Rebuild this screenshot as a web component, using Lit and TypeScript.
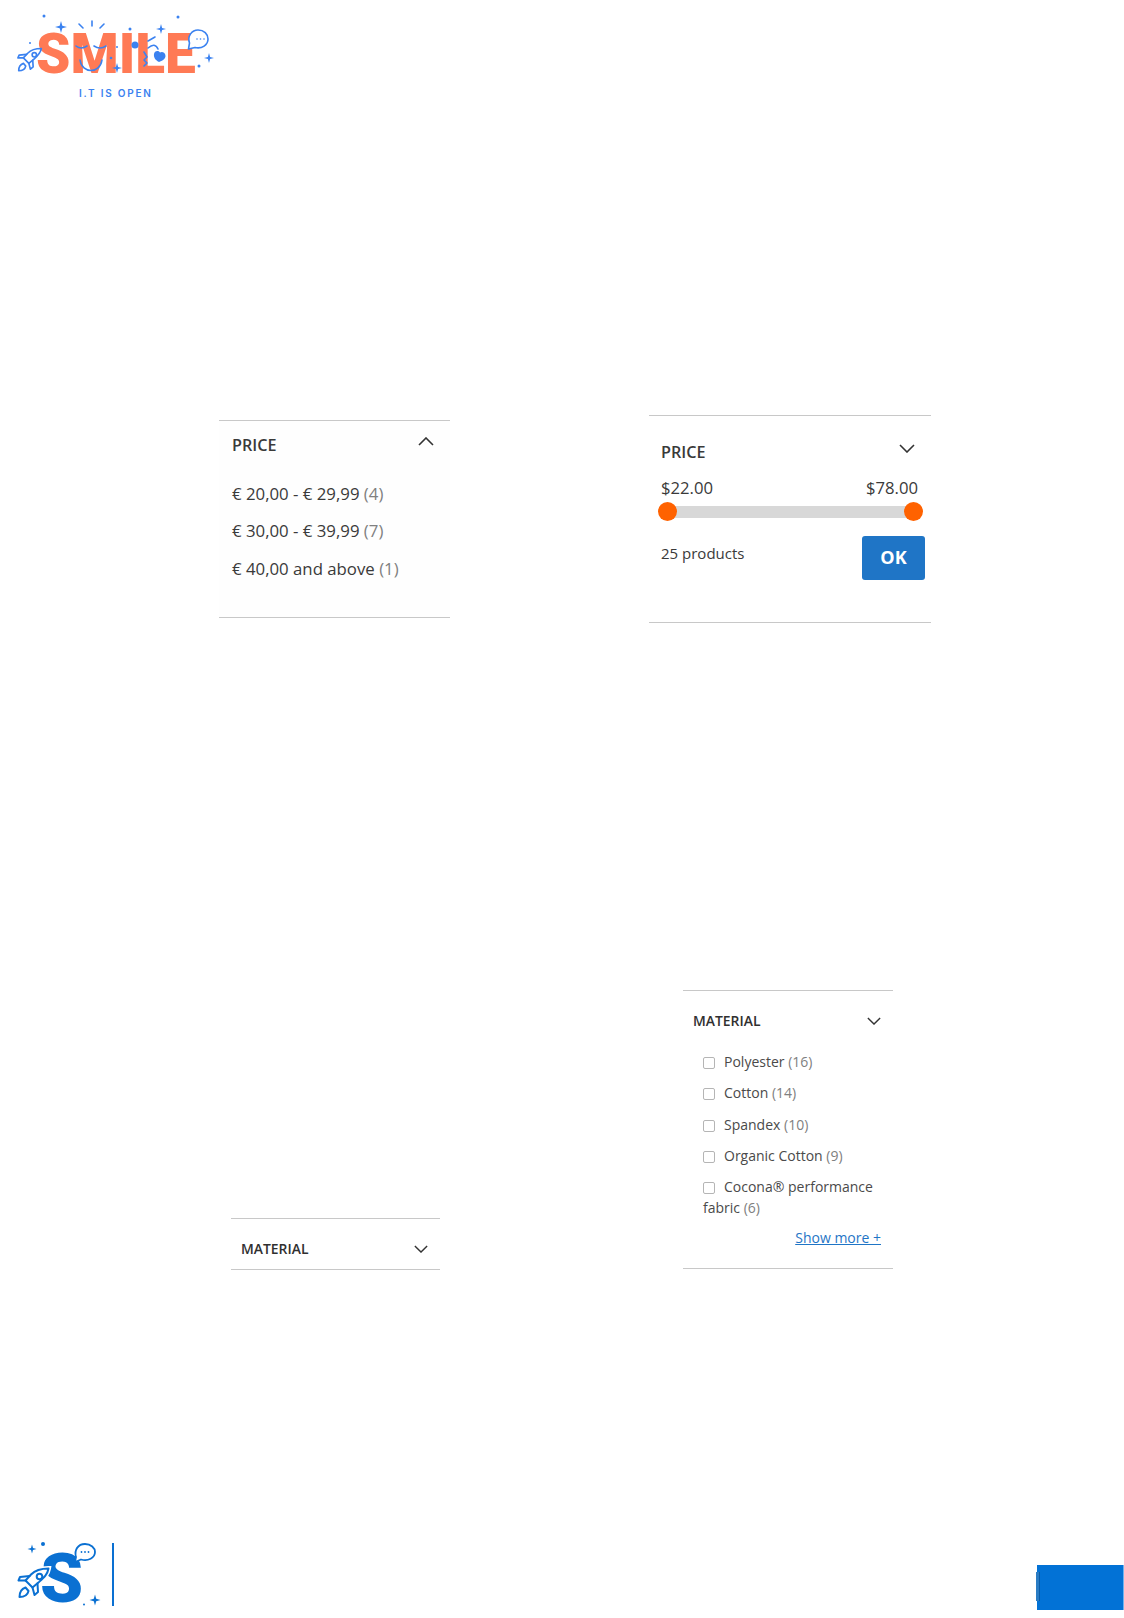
import { LitElement, html, css, svg } from "lit";
import { customElement } from "lit/decorators.js";

const chevron = (up = false) => html`<svg class="chev" viewBox="0 0 16 9" width="16" height="9" fill="none" stroke="#333" stroke-width="1.6"><path d=${up ? "M1 8L8 1L15 8" : "M1 1L8 8L15 1"}/></svg>`;

/* Rocket drawn in footer-logo space (nose near 48.5,38; tail near 19,68) */
const rocket = (c: string, w: number) => svg`<g fill="none" stroke=${c} stroke-width=${w} stroke-linejoin="round" stroke-linecap="round">
  <path d="M48.5 38.5C42 38.5 35 40.5 31 44.5L25.5 50.5L32.5 57.5L39 52C44 47.5 47.5 44.5 48.5 38.5Z"/>
  <circle cx="39.5" cy="46.5" r="2.8"/>
  <path d="M29.5 46L20 47L18.5 50.5L25.5 50.5"/>
  <path d="M37.5 53.5L38 62L34.5 65L32.5 57.5"/>
  <path d="M25.5 57.5C21 59 19.5 63 19.5 67C23.5 67 27.5 65.5 28.5 61Z"/>
</g>`;

const star = (x: number, y: number, r: number, c: string) => svg`<path fill=${c} d="M${x} ${y - r}L${x + r * 0.22} ${y - r * 0.22}L${x + r} ${y}L${x + r * 0.22} ${y + r * 0.22}L${x} ${y + r}L${x - r * 0.22} ${y + r * 0.22}L${x - r} ${y}L${x - r * 0.22} ${y - r * 0.22}Z"/>`;

const topLogoArt = (c: string) => svg`
  ${star(61, 27, 6, c)}${star(161, 29, 5, c)}${star(117, 68, 5, c)}${star(209, 58, 5, c)}
  <path fill="#fff" stroke=${c} stroke-width="1.6" stroke-linejoin="round" d="M188.500 49L189.500 43C187 36 192 30 198 30C204 30 208 34 208 39C208 45 202 49 195 47.500Z"/>
  <g fill=${c}>
    <circle cx="44" cy="16" r="1.5"/><circle cx="178" cy="17" r="1.5"/><circle cx="130" cy="29" r="1.5"/>
    <circle cx="30" cy="43" r="1"/><circle cx="117" cy="47" r="1"/><circle cx="111" cy="58" r="1.3"/>
    <circle cx="199" cy="66" r="1.5"/><circle cx="135" cy="45" r="3.5"/>
    <path d="M159 62C155 60 153.500 57 154 54C154.500 51 158 50 160 52.500C162 51 165.500 52.500 165.500 56C165.500 59 162 61 159 62Z"/>
    <circle cx="197" cy="39" r=".8"/><circle cx="200.500" cy="39" r=".8"/><circle cx="204" cy="39" r=".8"/>
  </g>
  <g stroke=${c} stroke-width="1.6" stroke-linecap="round" stroke-linejoin="round" fill="none">
    <path d="M79 24L83 28M92 21V26M104 24L100 28"/>
    <path d="M76 46Q81 50 87 46M94 46Q100 50 106 46M80 60C82 74 100 74 102 60"/>
    <path d="M148 41L155 37M148 48Q155 42 158 49M144 52L147 57L144 60L147 63L144 66"/>
  </g>
  <g transform="translate(3.500 18.500) scale(.78)">${rocket(c, 2.1)}</g>`;

const footLogoArt = (c: string) => svg`
  ${star(32, 19, 4.500, c)}${star(95, 70, 5.500, c)}
  <g fill=${c}><circle cx="43" cy="14" r="2"/><circle cx="84" cy="74.500" r="1"/></g>
  <path fill="#fff" stroke="#fff" stroke-width="5" d="M48.500 38.500C42 38.500 35 40.500 31 44.500L25.500 50.500L32.500 57.500L39 52C44 47.500 47.500 44.500 48.500 38.500Z"/>
  ${rocket(c, 2)}
  <path fill="#fff" stroke=${c} stroke-width="1.800" stroke-linejoin="round" d="M75 32L76 27C74 20 78 14 85 14C91 14 95 18 95 22C95 28 88 31.500 81 29.500Z"/>
  <g fill=${c}><circle cx="81.500" cy="22" r=".9"/><circle cx="85" cy="22" r=".9"/><circle cx="88.500" cy="22" r=".9"/></g>`;

@customElement("app-root")
export class AppRoot extends LitElement {
  static styles = css`
    :host { display: block; width: 1124px; height: 1618px; overflow: hidden; background: #fff; font-family: "Open Sans", "Liberation Sans", sans-serif; color: #3a3a3a; }
    .page { display: flex; flex-direction: column; height: 1618px; }
    .logo { position: relative; width: 230px; height: 110px; flex: none; }
    .logo svg { position: absolute; left: 0; top: 0; }
    .word { position: absolute; left: 36px; top: 34px; font: 900 55px/40px Roboto, "Liberation Sans", sans-serif; color: #ff7a55; }
    .tag { position: absolute; left: 79px; top: 86px; font: 600 10px/14px Inter, sans-serif; letter-spacing: 1.75px; color: #3b82f0; white-space: nowrap; }
    .row { display: flex; flex: none; }
    .row1 { height: 202px; margin-top: 305px; }
    .row2 { height: 280px; margin-top: 373px; }
    .panel { border-top: 1px solid #c8c8c8; border-bottom: 1px solid #c8c8c8; box-sizing: border-box; flex: none; }
    .p1 { width: 231px; height: 198px; margin-left: 219px; margin-top: 5px; padding: 13px 12px 0 13px; background: #fefefe; }
    .p2 { width: 282px; height: 208px; margin-left: 199px; padding: 25px 6px 0 12px; }
    .head { display: flex; justify-content: space-between; font-weight: 600; font-size: 16.2px; line-height: 22px; color: #3a3a3a; }
    .p1 .head svg { margin: 3px 4px 0 0; }
    .p2 .head svg { margin: 3px 10px 0 0; }
    .list { margin: 27px 0 0; padding: 0; list-style: none; font-size: 16.8px; line-height: 22px; display: flex; flex-direction: column; gap: 15.4px; }
    .n { color: #808080; }
    .prices { display: flex; justify-content: space-between; font-size: 16.7px; line-height: 22px; margin: 14px 7px 0 0; }
    .slider { position: relative; height: 12px; margin: 7px 6px 0 0; background: #d8d8d8; }
    .knob { position: absolute; top: -4px; width: 19px; height: 19px; border-radius: 50%; background: #ff6200; }
    .k1 { left: -3px; } .k2 { right: -4px; }
    .foot { display: flex; justify-content: space-between; align-items: flex-start; margin-top: 18px; }
    .foot span { font-size: 15px; line-height: 20px; margin-top: 7px; }
    .ok { width: 63px; height: 44px; background: #1f75c6; color: #fff; font-weight: 700; font-size: 18px; line-height: 43px; text-align: center; border-radius: 3px; }
    .p3 { width: 209px; height: 52px; margin-left: 231px; margin-top: 228px; padding: 20px 10px; }
    .p4 { width: 210px; height: 279px; margin-left: 243px; padding: 20px 10px 0 10px; }
    .p3 .head, .p4 .head { font-size: 13.9px; line-height: 20px; color: #303030; }
    .p3 .head svg, .p4 .head svg { width: 14px; height: 8px; margin: 6px 2px 0 0; }
    .checks { margin: 20px 0 0 10px; padding: 0; list-style: none; font-size: 14px; line-height: 21px; color: #4a4a4a; display: flex; flex-direction: column; gap: 10.3px; }
    .box { display: inline-block; width: 10px; height: 10px; border: 1px solid #b5b5b5; border-radius: 2px; margin-right: 9px; vertical-align: -2px; }
    .more { text-align: right; margin: 10px 2px 0 0; font-size: 14px; line-height: 20px; }
    .more a { color: #1f75c6; text-decoration: underline; }
    .bottom { display: flex; flex: none; height: 70px; margin-top: 270px; }
    .flogo { position: relative; width: 96px; height: 70px; margin-left: 16px; flex: none; }
    .flogo svg { position: absolute; left: -16px; top: -10px; }
    .fs { position: absolute; left: 24px; top: 14px; font: 900 69px/50px Roboto, sans-serif; color: #0a70d2; }
    .bar { width: 2px; height: 63px; margin-top: 3px; background: #0a70d2; flex: none; }
    .blue { position: relative; width: 86px; height: 45px; margin: 25px 0 0 auto; background: #0272d6; border-right: 1px solid #6db4f0; flex: none; }
    .streak { position: absolute; left: -1px; top: 7px; width: 3px; height: 29px; background: #2a7cc4; border-right: 1px solid #0a5ca8; }
  `;

  render() {
    return html`<div class="page">
      <div class="logo">
        <span class="word">SMILE</span>
        <svg width="230" height="110" viewBox="0 0 230 110" fill="none">${topLogoArt("#3b82f0")}</svg>
        <span class="tag">I.T IS OPEN</span>
      </div>
      <div class="row row1">
        <section class="panel p1">
          <div class="head"><span>PRICE</span>${chevron(true)}</div>
          <ul class="list">
            <li>€ 20,00 - € 29,99 <span class="n">(4)</span></li>
            <li>€ 30,00 - € 39,99 <span class="n">(7)</span></li>
            <li>€ 40,00 and above <span class="n">(1)</span></li>
          </ul>
        </section>
        <section class="panel p2">
          <div class="head"><span>PRICE</span>${chevron()}</div>
          <div class="prices"><span>$22.00</span><span>$78.00</span></div>
          <div class="slider"><i class="knob k1"></i><i class="knob k2"></i></div>
          <div class="foot"><span>25 products</span><div class="ok">OK</div></div>
        </section>
      </div>
      <div class="row row2">
        <section class="panel p3"><div class="head"><span>MATERIAL</span>${chevron()}</div></section>
        <section class="panel p4">
          <div class="head"><span>MATERIAL</span>${chevron()}</div>
          <ul class="checks">
            <li><i class="box"></i>Polyester <span class="n">(16)</span></li>
            <li><i class="box"></i>Cotton <span class="n">(14)</span></li>
            <li><i class="box"></i>Spandex <span class="n">(10)</span></li>
            <li><i class="box"></i>Organic Cotton <span class="n">(9)</span></li>
            <li><i class="box"></i>Cocona® performance fabric <span class="n">(6)</span></li>
          </ul>
          <div class="more"><a>Show more +</a></div>
        </section>
      </div>
      <div class="bottom">
        <div class="flogo">
          <span class="fs">S</span>
          <svg width="112" height="90" viewBox="0 0 112 90" fill="none">${footLogoArt("#0a70d2")}</svg>
        </div>
        <div class="bar"></div>
        <div class="blue"><i class="streak"></i></div>
      </div>
    </div>`;
  }
}
